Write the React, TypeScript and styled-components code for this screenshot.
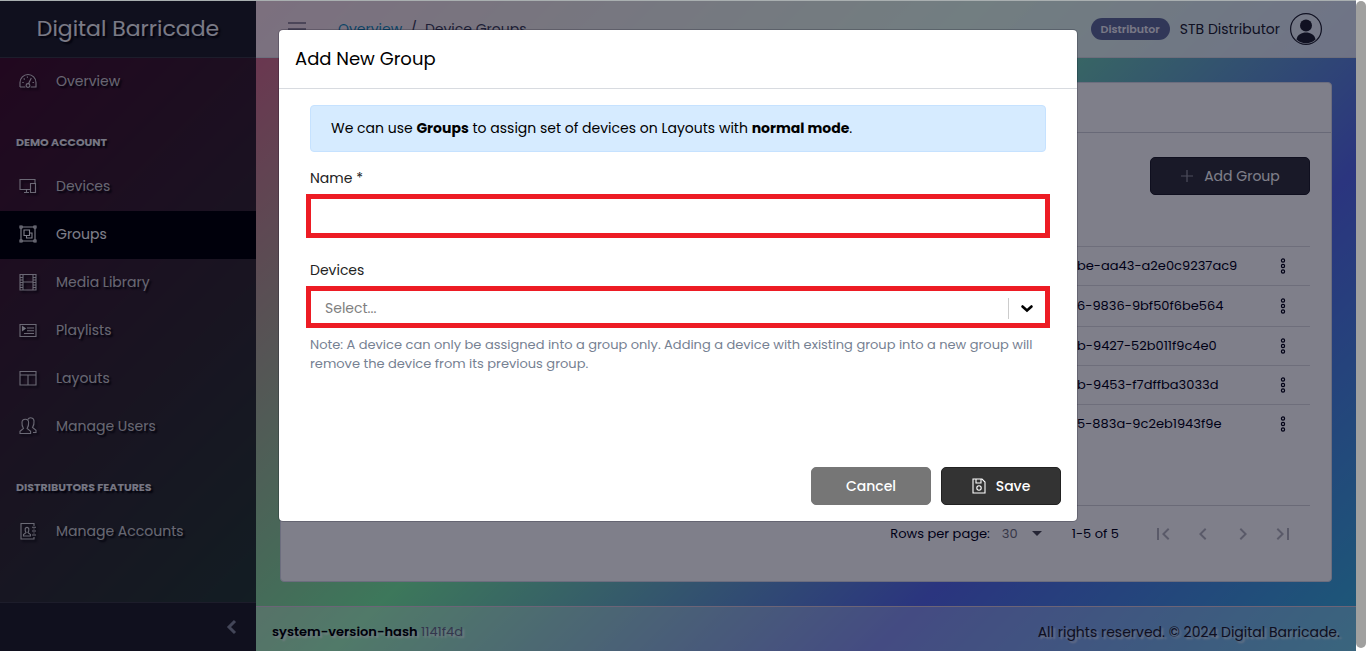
import React from 'react';
import styled, { createGlobalStyle, css } from 'styled-components';

const GlobalStyle = createGlobalStyle`
  *, *::before, *::after { box-sizing: border-box; }
  body {
    margin: 0;
    font-family: Poppins, Inter, "Open Sans", sans-serif;
    font-size: 14px;
    line-height: 20px;
    color: #000015;
    background: #fff;
    overflow: hidden;
  }
  button, input, select { font: inherit; }
`;

const Shell = styled.div`
  display: flex;
  min-height: 100vh;
`;

const Workspace = styled.div`
  position: relative;
  display: flex;
  flex: 1;
  min-width: 0;
  background: linear-gradient(135deg, #ff3280 0%, #7af0a0 49%, #566ae8 76%, #38b4da 100%);
`;

const TopEdge = styled.div`
  position: absolute;
  inset: 0 0 auto 0;
  height: 1px;
  background: #a9afb0;
  z-index: 3;
`;

const ScrollTrack = styled.div`
  width: 10px;
  padding: 1px 0 3px;
  background: #fff;
  display: flex;
`;

const ScrollThumb = styled.div`
  flex: 1;
  border-radius: 5px;
  background: #a0a09f;
`;

const Sidebar = styled.aside`
  width: 256px;
  flex: none;
  display: flex;
  flex-direction: column;
  background: rgba(0, 0, 8, 0.73);
  color: rgba(255, 255, 255, 0.8);
  text-shadow: 2px 2px 2px #000;
`;

const Brand = styled.div`
  height: 58px;
  display: flex;
  align-items: center;
  justify-content: center;
  background: #202126;
  border-bottom: 1px solid #3a3a40;
  font-size: 22px;
  line-height: 28px;
  color: #f4f4f6;
`;

const Nav = styled.nav`
  flex: 1;
`;

const NavTitle = styled.h2`
  margin: 0;
  padding: 28px 16px 13px;
  font-size: 11px;
  line-height: 16px;
  font-weight: 700;
  text-transform: uppercase;
  color: #ececf0;
`;

const NavLink = styled.a<{ $active?: boolean }>`
  display: flex;
  align-items: center;
  height: 48px;
  padding: 0 19px 2px;
  gap: 19px;
  color: inherit;
  text-decoration: none;
  ${(p) =>
    p.$active &&
    css`
      background: #000;
      color: #fff;
    `}
`;

const SideIcon = styled.svg`
  width: 18px;
  height: 18px;
  flex: none;
  overflow: visible;
  fill: none;
  stroke: currentColor;
  stroke-width: 1.1;
  filter: drop-shadow(2px 2px 1px #000);
`;

const Minimizer = styled.button`
  height: 49px;
  display: flex;
  align-items: center;
  justify-content: flex-end;
  padding: 0 19px;
  border: 0;
  border-top: 1px solid #3a3a40;
  background: #202026;
  color: #868c9a;
`;

const Main = styled.div`
  flex: 1;
  min-width: 0;
  display: flex;
  flex-direction: column;
`;

const Header = styled.header`
  height: 58px;
  display: flex;
  align-items: center;
  padding: 0 34px 0 32px;
  background: rgba(255, 255, 255, 0.8);
  border-bottom: 1px solid #d8dbe0;
`;

const Toggle = styled.button`
  display: flex;
  padding: 0;
  border: 0;
  background: none;
  color: #3c3650;
`;

const Crumbs = styled.nav`
  flex: 1;
  display: flex;
  gap: 8px;
  padding-left: 32px;
  color: #3c3e55;
  a {
    color: #1a8ab8;
    text-decoration: none;
  }
`;

const UserArea = styled.div`
  display: flex;
  align-items: center;
  gap: 10px;
  color: #20222e;
`;

const Badge = styled.span`
  padding: 3px 10px;
  border-radius: 11px;
  background: #636f9b;
  color: #f0f0f6;
  font-size: 11px;
  line-height: 16px;
  font-weight: 600;
`;

const Avatar = styled.svg`
  width: 32px;
  height: 32px;
`;

const Content = styled.main`
  flex: 1;
  display: flex;
  padding: 24px;
`;

const Card = styled.section`
  flex: 1;
  display: flex;
  flex-direction: column;
  background: #fff;
  border: 1px solid #d8dbe6;
  border-radius: 4px;
`;

const CardHeader = styled.div`
  height: 50px;
  border-bottom: 1px solid #d0d2d8;
`;

const CardBody = styled.div`
  flex: 1;
  display: flex;
  flex-direction: column;
  padding: 24px 21px 20px;
`;

const Toolbar = styled.div`
  display: flex;
  justify-content: flex-end;
  padding-bottom: 51px;
`;

const Button = styled.button<{ $tone?: 'dark' | 'grey' | 'ink' }>`
  width: 160px;
  height: 38px;
  display: flex;
  align-items: center;
  justify-content: center;
  gap: 10px;
  border: 1px solid #222;
  border-radius: 5px;
  background: #333;
  color: #fff;
  font-weight: 500;
  ${(p) =>
    p.$tone === 'ink' &&
    css`
      border-color: #1f1f28;
      background: #33333a;
      font-weight: 400;
    `}
  ${(p) =>
    p.$tone === 'grey' &&
    css`
      border-color: #767676;
      background: #767676;
    `}
`;

const TableArea = styled.div`
  flex: 1;
`;

const Table = styled.table`
  width: 100%;
  table-layout: fixed;
  border-collapse: collapse;
  font-size: 13px;
  td {
    height: 39px;
    padding: 0;
    border-top: 1px solid #dcdce0;
    white-space: nowrap;
  }
  tr:nth-child(2) td { height: 41px; }
`;

const IdCol = styled.col`
  width: 178px;
`;

const MenuCol = styled.col`
  width: 55px;
`;

const RowMenu = styled.button`
  display: flex;
  margin: 0 auto;
  padding: 0;
  border: 0;
  background: none;
  color: #000015;
`;

const Pagination = styled.div`
  height: 56px;
  display: flex;
  align-items: center;
  justify-content: flex-end;
  padding-right: 15px;
  border-top: 1px solid #d4d4d8;
  font-size: 13px;
`;

const PerPage = styled.label`
  display: flex;
  align-items: center;
  gap: 12px;
  select {
    width: 18px;
    padding: 0;
    border: 0;
    appearance: none;
    background: none;
    color: #70707a;
  }
  svg { pointer-events: none; }
`;

const RangeText = styled.span`
  padding: 0 32px 0 30px;
`;

const PageButtons = styled.div`
  display: flex;
  gap: 16px;
`;

const PageButton = styled.button`
  width: 24px;
  height: 24px;
  padding: 0;
  border: 0;
  background: none;
  color: #b4b4bc;
`;

const Footer = styled.footer`
  height: 45px;
  display: flex;
  align-items: center;
  justify-content: space-between;
  padding: 5px 16px 0;
  background: rgba(255, 255, 255, 0.3);
  border-top: 1px solid #d8c8d8;
  text-shadow: 2px 2px 2px rgba(255, 255, 255, 0.8);
  color: #20202c;
`;

const Version = styled.div`
  font-size: 13px;
  color: #686c84;
  strong {
    font-weight: 600;
    color: #000;
  }
`;

const Backdrop = styled.div`
  position: absolute;
  inset: 0;
  z-index: 1;
  background: rgba(0, 0, 21, 0.5);
`;

const DialogLayer = styled.div`
  position: absolute;
  inset: 0;
  z-index: 2;
  display: flex;
  align-items: flex-start;
  justify-content: center;
  padding: 29px 0;
`;

const Dialog = styled.div`
  width: 100%;
  max-width: 800px;
  background: #fff;
  border: 1px solid rgba(0, 0, 21, 0.2);
  background-clip: padding-box;
  border-radius: 5px;
`;

const DialogHeader = styled.div`
  padding: 16px;
  border-bottom: 1px solid #d8dbe0;
  h1 {
    margin: 0;
    font-size: 18px;
    line-height: 26px;
    font-weight: 400;
    color: #000;
  }
`;

const DialogBody = styled.div`
  padding: 16px 31px;
  min-height: 362px;
`;

const Alert = styled.div`
  padding: 12px 20px;
  margin-bottom: 16px;
  border: 1px solid #c6e2ff;
  border-radius: 4px;
  background: #d6ebff;
  color: #000;
  line-height: 21px;
`;

const Field = styled.div`
  margin-bottom: 22px;
  > label {
    display: block;
    margin-bottom: 6px;
    color: #222;
  }
`;

const controlFrame = css`
  width: calc(100% + 8px);
  margin: 0 -4px;
  border: 5px solid #ed1c24;
  background: #fff;
`;

const TextInput = styled.input`
  ${controlFrame}
  display: block;
  height: 44px;
  padding: 0 12px;
  outline: 0;
`;

const SelectFrame = styled.div`
  ${controlFrame}
  display: flex;
  align-items: center;
  height: 42px;
  padding-top: 2px;
  select {
    flex: 1;
    height: 30px;
    padding: 0 14px;
    border: 0;
    outline: 0;
    appearance: none;
    background: none;
    color: #808080;
  }
`;

const Separator = styled.span`
  width: 1px;
  height: 21px;
  background: #ccc;
`;

const Chevron = styled.svg`
  width: 20px;
  height: 20px;
  margin: 0 8px;
  fill: none;
  stroke: #000;
  stroke-width: 2.6;
  stroke-linecap: round;
  pointer-events: none;
`;

const Hint = styled.p`
  margin: 7px 0 0;
  font-size: 13px;
  line-height: 19px;
  color: #768192;
`;

const DialogFooter = styled.div`
  display: flex;
  justify-content: flex-end;
  gap: 10px;
  padding: 16px;
  ${Button} { width: 120px; }
`;

const icons: Record<string, React.ReactNode> = {
  gauge: (
    <>
      <path d="M1 15v-4.500a8 8 0 0 1 16 0V15h-5.300M1 15h5.300M9.600 11.600l2.700-5.600" />
      <circle cx="9" cy="13.500" r="1.900" />
      <path d="M3.300 10.500h1.400M4.700 6.500l1 1M8.400 4.500v1.300M13.500 10.500h1.400" />
    </>
  ),
  devices: (
    <>
      <path d="M11 12.500H1v-10h15v4" />
      <path d="M11.500 6.500h5v9h-5zM5 15.500h5M7.500 12.500v3" />
    </>
  ),
  groups: (
    <>
      <path d="M3 2h12M3 16h12M2 3v12M16 3v12" />
      <path d="M1 1h2v2H1zM15 1h2v2h-2zM1 15h2v2H1zM15 15h2v2h-2zM5 5h5.500v5.500H5z" />
      <path d="M10.500 8h2.500v5H7.500v-2.500" />
    </>
  ),
  film: (
    <path d="M1 1.500h16v15.500H1zM4 1.500V17M14 1.500V17M4 9h10M1 4.500h3M1 7h3M1 9.500h3M1 12h3M1 14.500h3M14 4.500h3M14 7h3M14 9.500h3M14 12h3M14 14.500h3" />
  ),
  playlist: (
    <>
      <path d="M1 3.500h16v12H1zM8 7h7M8 9.700h7M5 12.500h10" />
      <path d="M3.500 5.500v4L6.300 7.500z" fill="currentColor" />
    </>
  ),
  layout: <path d="M1 2.500h16v13.500H1zM1 6h16M9 6v10" />,
  users: (
    <>
      <path d="M1 16.500v-2.300l3.500-2.700c-1.600-2.300-1.700-4-1.500-6A3.300 3.300 0 0 1 9.600 5.500c.2 2 .1 3.700-1.500 6l3.500 2.700v2.300z" />
      <path d="M8.800 2.600A3.300 3.300 0 0 1 15 4.500c.2 2 .1 3.700-1.500 6l3.500 2.700v2.300h-3" />
    </>
  ),
  contacts: (
    <>
      <path d="M15 4V1.500H2V17h13v-2M15 6.500v1M15 10.500v1M13 5.200h4M13 9h4M13 13h4" />
      <path d="M4.500 14v-1.500L7 10.600C6 9 6 8 6.200 6.700a1.900 1.900 0 0 1 3.600 0C10 8 10 9 9 10.600l2.500 1.900V14z" />
    </>
  ),
};

type Entry = { label: string; icon?: string; active?: boolean };

const entries: Entry[] = [
  { label: 'Overview', icon: 'gauge' },
  { label: 'Demo Account' },
  { label: 'Devices', icon: 'devices' },
  { label: 'Groups', icon: 'groups', active: true },
  { label: 'Media Library', icon: 'film' },
  { label: 'Playlists', icon: 'playlist' },
  { label: 'Layouts', icon: 'layout' },
  { label: 'Manage Users', icon: 'users' },
  { label: 'Distributors Features' },
  { label: 'Manage Accounts', icon: 'contacts' },
];

const groupIds = [
  'be-aa43-a2e0c9237ac9',
  '6-9836-9bf50f6be564',
  'b-9427-52b011f9c4e0',
  'b-9453-f7dffba3033d',
  '5-883a-9c2eb1943f9e',
];

const pageIcons = [
  { label: 'First page', d: 'M18.400 16.600 13.800 12l4.600-4.600L17 6l-6 6 6 6zM6 6h2v12H6z' },
  { label: 'Previous page', d: 'M15.400 7.400 14 6l-6 6 6 6 1.400-1.400L10.800 12z' },
  { label: 'Next page', d: 'M10 6 8.600 7.400l4.600 4.600-4.600 4.600L10 18l6-6z' },
  { label: 'Last page', d: 'M5.600 7.400 10.200 12l-4.600 4.600L7 18l6-6-6-6zM16 6h2v12h-2z' },
];

export default function App() {
  return (
    <Shell>
      <GlobalStyle />
      <Workspace>
        <TopEdge />
        <Sidebar>
          <Brand>Digital Barricade</Brand>
          <Nav>
            {entries.map((e) =>
              e.icon ? (
                <NavLink key={e.label} href="#" $active={e.active}>
                  <SideIcon viewBox="0 0 18 18">{icons[e.icon]}</SideIcon>
                  {e.label}
                </NavLink>
              ) : (
                <NavTitle key={e.label}>{e.label}</NavTitle>
              ),
            )}
          </Nav>
          <Minimizer aria-label="Minimize sidebar">
            <svg width="12" height="16" viewBox="0 0 12 16" fill="none" stroke="currentColor" strokeWidth="3">
              <path d="M10 2 4 8l6 6" />
            </svg>
          </Minimizer>
        </Sidebar>
        <Main>
          <Header>
            <Toggle aria-label="Toggle sidebar">
              <svg width="18" height="14" viewBox="0 0 18 14" stroke="currentColor" strokeWidth="1.2">
                <path d="M0 1h18M0 7h18M0 13h18" />
              </svg>
            </Toggle>
            <Crumbs aria-label="Breadcrumb">
              <a href="#">Overview</a>
              <span>/</span>
              <span>Device Groups</span>
            </Crumbs>
            <UserArea>
              <Badge>Distributor</Badge>
              <span>STB Distributor</span>
              <Avatar viewBox="0 0 32 32">
                <circle cx="16" cy="16" r="15.400" fill="#fff" fillOpacity=".35" stroke="#20222e" strokeWidth="1.200" />
                <circle cx="16" cy="12.500" r="6" fill="#20222e" />
                <path d="M6.500 26.500c1-5 5-7 9.500-7s8.500 2 9.500 7a14 14 0 0 1-19 0z" fill="#20222e" />
              </Avatar>
            </UserArea>
          </Header>
          <Content>
            <Card>
              <CardHeader />
              <CardBody>
                <Toolbar>
                  <Button $tone="ink">
                    <svg width="14" height="14" viewBox="0 0 14 14" stroke="#9a9aa2" strokeWidth="1.200">
                      <path d="M7 1v12M1 7h12" />
                    </svg>
                    Add Group
                  </Button>
                </Toolbar>
                <TableArea>
                  <Table>
                    <colgroup>
                      <col />
                      <IdCol />
                      <MenuCol />
                    </colgroup>
                    <tbody>
                      {groupIds.map((id) => (
                        <tr key={id}>
                          <td />
                          <td>{id}</td>
                          <td>
                            <RowMenu aria-label="Row actions">
                              <svg width="6" height="16" viewBox="0 0 6 16" fill="none" stroke="currentColor" strokeWidth="1.200">
                                <circle cx="3" cy="2.500" r="1.600" />
                                <circle cx="3" cy="8" r="1.600" />
                                <circle cx="3" cy="13.500" r="1.600" />
                              </svg>
                            </RowMenu>
                          </td>
                        </tr>
                      ))}
                    </tbody>
                  </Table>
                </TableArea>
                <Pagination>
                  <PerPage>
                    Rows per page:
                    <select defaultValue="30">
                      <option>30</option>
                    </select>
                    <svg width="10" height="5" viewBox="0 0 10 5" fill="#4a4a54">
                      <path d="M0 0h10L5 5z" />
                    </svg>
                  </PerPage>
                  <RangeText>1-5 of 5</RangeText>
                  <PageButtons>
                    {pageIcons.map((p) => (
                      <PageButton key={p.label} aria-label={p.label}>
                        <svg width="24" height="24" viewBox="0 0 24 24" fill="currentColor">
                          <path d={p.d} />
                        </svg>
                      </PageButton>
                    ))}
                  </PageButtons>
                </Pagination>
              </CardBody>
            </Card>
          </Content>
          <Footer>
            <Version>
              <strong>system-version-hash</strong> 1141f4d
            </Version>
            <div>All rights reserved. © 2024 Digital Barricade.</div>
          </Footer>
        </Main>
        <Backdrop />
        <DialogLayer>
          <Dialog role="dialog" aria-labelledby="dialog-title">
            <DialogHeader>
              <h1 id="dialog-title">Add New Group</h1>
            </DialogHeader>
            <DialogBody>
              <Alert>
                We can use <b>Groups</b> to assign set of devices on Layouts with <b>normal mode</b>.
              </Alert>
              <Field>
                <label htmlFor="group-name">Name *</label>
                <TextInput id="group-name" type="text" />
              </Field>
              <Field>
                <label htmlFor="group-devices">Devices</label>
                <SelectFrame>
                  <select id="group-devices" defaultValue="">
                    <option value="">Select...</option>
                  </select>
                  <Separator />
                  <Chevron viewBox="0 0 20 20">
                    <path d="M5.500 8.500 10 12.500l4.500-4" />
                  </Chevron>
                </SelectFrame>
                <Hint>
                  Note: A device can only be assigned into a group only. Adding a device with existing group into a new
                  group will remove the device from its previous group.
                </Hint>
              </Field>
            </DialogBody>
            <DialogFooter>
              <Button $tone="grey">Cancel</Button>
              <Button>
                <svg width="14" height="16" viewBox="0 0 14 16" fill="none" stroke="#fff" strokeWidth="1.100">
                  <path d="M1 1h9l3 3v11H1zM4 1v4h5V1" />
                  <circle cx="7" cy="10" r="2.200" />
                </svg>
                Save
              </Button>
            </DialogFooter>
          </Dialog>
        </DialogLayer>
      </Workspace>
      <ScrollTrack>
        <ScrollThumb />
      </ScrollTrack>
    </Shell>
  );
}
